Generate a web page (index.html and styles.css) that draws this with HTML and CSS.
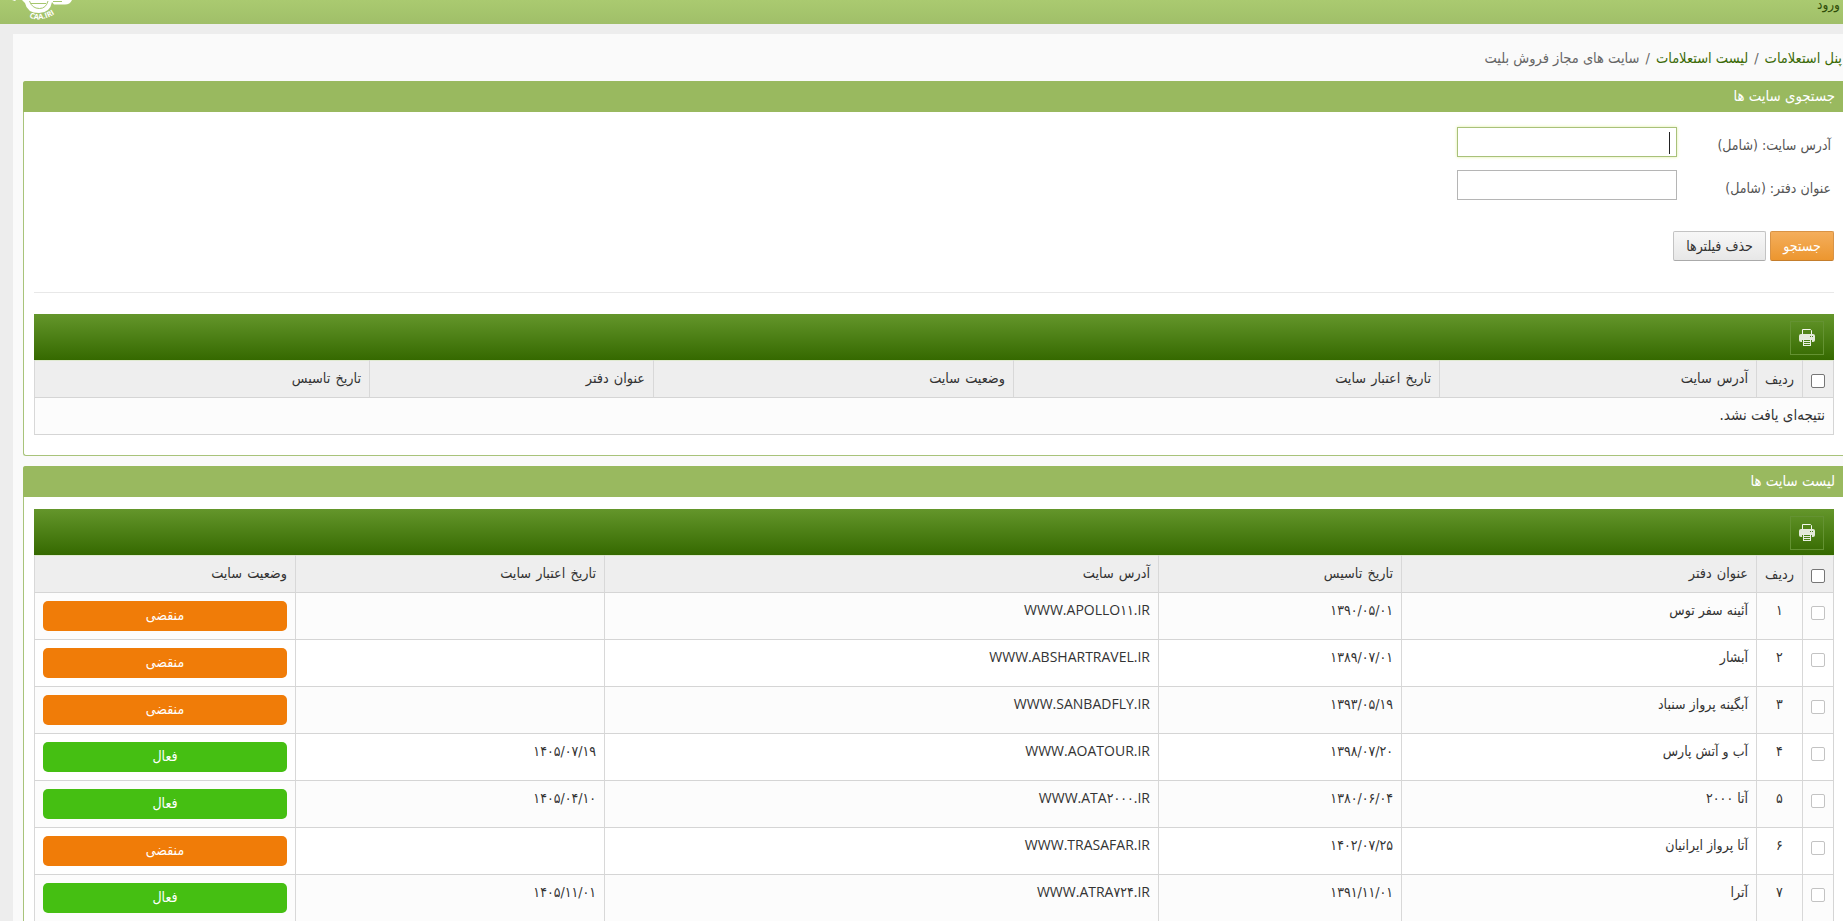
FILE: index.html
```html
<!DOCTYPE html>
<html lang="fa" dir="rtl">
<head>
    <meta charset="UTF-8">
    <meta name="viewport" content="width=device-width, initial-scale=1.0">
    <title>سایت های مجاز فروش بلیت</title>
    <link rel="stylesheet" href="styles.css">
</head>
<body>
    <header class="topbar">
        <a class="login" href="#">ورود</a>
        <svg class="logo" width="74" height="24" viewBox="0 0 74 24">
            <path d="M12 0 L16 0 L15 1 Z" fill="#fff"/>
            <path d="M22 0 H56 V0 H72 Q70 4.500 65 4.500 H54 L52 2 Q50 13 39 13 Q27 13 25 3 Z" fill="#fff"/>
            <path d="M29.500 1 Q32 8.500 39.500 8.500 Q46 8.500 48 1 M31 3.500 H46 M53 1.500 H62" fill="none" stroke="#a5c66d" stroke-width="1"/>
            <path id="arc" d="M29 17 Q41 23.500 57 12.500" fill="none"/>
            <text class="logo-text"><textPath href="#arc">CAA.IRI</textPath></text>
        </svg>
    </header>

    <main class="content">
        <nav class="breadcrumb">
            <a href="#">پنل استعلامات</a><span class="sep">/</span><a href="#">لیست استعلامات</a><span class="sep">/</span><span>سایت های مجاز فروش بلیت</span>
        </nav>

        <!-- Search panel -->
        <section class="panel">
            <h2 class="panel-title">جستجوی سایت ها</h2>
            <div class="panel-body">
                <form class="search-form">
                    <div class="field">
                        <label class="field-label">آدرس سایت: (شامل)</label>
                        <div class="field-input focused"><span class="caret"></span></div>
                    </div>
                    <div class="field">
                        <label class="field-label">عنوان دفتر: (شامل)</label>
                        <div class="field-input"></div>
                    </div>
                    <div class="actions">
                        <button type="button" class="btn btn-primary">جستجو</button>
                        <button type="button" class="btn">حذف فیلترها</button>
                    </div>
                </form>
                <div class="toolbar">
                    <a class="print" href="#">
                        <svg width="16" height="17" viewBox="0 0 16 17">
                            <path d="M3.500 6 V0.500 H11.500 L12.500 1.500 V6" fill="none" stroke="#f4f8ee"/>
                            <rect x="0" y="5" width="16" height="8" rx="2" fill="#e4eadb"/>
                            <path d="M11 7.500 H12 M13 7.500 H14" stroke="#4b7f16"/>
                            <rect x="4.500" y="10.500" width="7" height="6" fill="#4b7f16" stroke="#e9efe2"/>
                            <path d="M3.500 11 V14 M12.500 11 V14" stroke="#4b7f16"/>
                            <path d="M5 12.500 H11 M5 14.500 H11" stroke="#e9efe2"/>
                        </svg>
                    </a>
                </div>
                <table class="grid grid-search">
                    <colgroup><col class="c-check"><col class="c-row"><col class="s-url"><col class="s-expire"><col class="s-status"><col class="s-office"><col></colgroup>
                    <thead>
                        <tr><th class="check"><input type="checkbox"></th><th class="num">ردیف</th><th>آدرس سایت</th><th>تاریخ اعتبار سایت</th><th>وضعیت سایت</th><th>عنوان دفتر</th><th>تاریخ تاسیس</th></tr>
                    </thead>
                    <tbody>
                        <tr><td colspan="7" class="empty">نتیجه‌ای یافت نشد.</td></tr>
                    </tbody>
                </table>
            </div>
        </section>

        <!-- Site list panel -->
        <section class="panel">
            <h2 class="panel-title">لیست سایت ها</h2>
            <div class="panel-body list-body">
                <div class="toolbar">
                    <a class="print" href="#">
                        <svg width="16" height="17" viewBox="0 0 16 17">
                            <path d="M3.500 6 V0.500 H11.500 L12.500 1.500 V6" fill="none" stroke="#f4f8ee"/>
                            <rect x="0" y="5" width="16" height="8" rx="2" fill="#e4eadb"/>
                            <path d="M11 7.500 H12 M13 7.500 H14" stroke="#4b7f16"/>
                            <rect x="4.500" y="10.500" width="7" height="6" fill="#4b7f16" stroke="#e9efe2"/>
                            <path d="M3.500 11 V14 M12.500 11 V14" stroke="#4b7f16"/>
                            <path d="M5 12.500 H11 M5 14.500 H11" stroke="#e9efe2"/>
                        </svg>
                    </a>
                </div>
                <table class="grid grid-list">
                    <colgroup><col class="c-check"><col class="c-row"><col class="l-office"><col class="l-founded"><col class="l-url"><col class="l-expire"><col></colgroup>
                    <thead>
                        <tr><th class="check"><input type="checkbox"></th><th class="num">ردیف</th><th>عنوان دفتر</th><th>تاریخ تاسیس</th><th>آدرس سایت</th><th>تاریخ اعتبار سایت</th><th>وضعیت سایت</th></tr>
                    </thead>
                    <tbody>
                        <tr><td class="check"><input type="checkbox" disabled></td><td class="num">۱</td><td>آئینه سفر توس</td><td>۱۳۹۰/۰۵/۰۱</td><td class="url"><bdi dir="ltr">WWW.APOLLO<span class="fa">۱۱</span>.IR</bdi></td><td></td><td><span class="badge expired">منقضی</span></td></tr>
                        <tr><td class="check"><input type="checkbox" disabled></td><td class="num">۲</td><td>آبشار</td><td>۱۳۸۹/۰۷/۰۱</td><td class="url"><bdi dir="ltr">WWW.ABSHARTRAVEL.IR</bdi></td><td></td><td><span class="badge expired">منقضی</span></td></tr>
                        <tr><td class="check"><input type="checkbox" disabled></td><td class="num">۳</td><td>آبگینه پرواز سنباد</td><td>۱۳۹۳/۰۵/۱۹</td><td class="url"><bdi dir="ltr">WWW.SANBADFLY.IR</bdi></td><td></td><td><span class="badge expired">منقضی</span></td></tr>
                        <tr><td class="check"><input type="checkbox" disabled></td><td class="num">۴</td><td>آب و آتش پارس</td><td>۱۳۹۸/۰۷/۲۰</td><td class="url"><bdi dir="ltr">WWW.AOATOUR.IR</bdi></td><td>۱۴۰۵/۰۷/۱۹</td><td><span class="badge active">فعال</span></td></tr>
                        <tr><td class="check"><input type="checkbox" disabled></td><td class="num">۵</td><td>آتا ۲۰۰۰</td><td>۱۳۸۰/۰۶/۰۴</td><td class="url"><bdi dir="ltr">WWW.ATA<span class="fa">۲۰۰۰</span>.IR</bdi></td><td>۱۴۰۵/۰۴/۱۰</td><td><span class="badge active">فعال</span></td></tr>
                        <tr><td class="check"><input type="checkbox" disabled></td><td class="num">۶</td><td>آتا پرواز ایرانیان</td><td>۱۴۰۲/۰۷/۲۵</td><td class="url"><bdi dir="ltr">WWW.TRASAFAR.IR</bdi></td><td></td><td><span class="badge expired">منقضی</span></td></tr>
                        <tr><td class="check"><input type="checkbox" disabled></td><td class="num">۷</td><td>آترا</td><td>۱۳۹۱/۱۱/۰۱</td><td class="url"><bdi dir="ltr">WWW.ATRA<span class="fa">۷۲۴</span>.IR</bdi></td><td>۱۴۰۵/۱۱/۰۱</td><td><span class="badge active">فعال</span></td></tr>
                    </tbody>
                </table>
            </div>
        </section>
    </main>
</body>
</html>
```

FILE: styles.css
```css
* {
    box-sizing: border-box;
}

body {
    margin: 0;
    height: 921px;
    overflow: hidden;
    background: #ededed;
    font-family: "DejaVu Sans Condensed", "DejaVu Sans", sans-serif;
    font-stretch: condensed;
    font-size: 14px;
    color: #333;
}

a {
    color: #3b6a07;
    text-decoration: none;
}

.topbar {
    display: flex;
    justify-content: space-between;
    height: 24px;
    padding-right: 3px;
    background: linear-gradient(#aaca70, #a0bf69);
}

.login {
    line-height: 14px;
    margin-top: -3px;
    color: #2f4d08;
    font-size: 13.500px;
}

.logo {
    direction: ltr;
}

.logo-text {
    font: bold 7.500px "Open Sans", sans-serif;
    fill: #fff;
}

.content {
    height: 887px;
    margin: 10px 0 0 13px;
    padding-left: 10px;
    background: #fafafa;
    overflow: hidden;
}

.breadcrumb {
    height: 47px;
    line-height: 48px;
    padding-right: 1px;
    color: #666;
    font-size: 14.500px;
}

.sep {
    margin: 0 6px;
}

/* Panels run past the right edge of the window */
.panel {
    margin-bottom: 10px;
    border: 1px solid #a8c37a;
    border-right: 0;
    border-radius: 3px 0 0 3px;
    background: #fff;
}

.panel-title {
    height: 31px;
    margin: -1px 0 0 -1px;
    padding-right: 8px;
    border-radius: 3px 0 0 0;
    background: #99b95f;
    color: #fff;
    font-size: 14.800px;
    font-weight: normal;
    line-height: 30px;
}

.panel-body {
    padding: 15px 9px 20px 10px;
}

.list-body {
    padding-top: 12px;
}

/* Search form */
.search-form {
    height: 166px;
    margin-bottom: 21px;
    border-bottom: 1px solid #e8e8e8;
}

.field {
    display: flex;
    height: 43px;
    padding-right: 3px;
}

.field-label {
    width: 154px;
    line-height: 36px;
    color: #555;
}

.field-input {
    display: flex;
    width: 220px;
    height: 30px;
    padding: 4px 6px;
    border: 1px solid #b5b5b5;
    background: #fff;
}

.field-input.focused {
    border-color: #a9c17a;
    box-shadow: 0 0 3px #dff0a0;
}

.caret {
    width: 1px;
    height: 22px;
    background: #222;
}

.actions {
    display: flex;
    gap: 4px;
    margin-top: 18px;
}

.btn {
    width: 93px;
    height: 30px;
    padding: 0;
    border: 1px solid #c3c3c3;
    border-bottom-color: #aaa;
    border-radius: 2px;
    background: linear-gradient(#f7f7f7, #e7e7e7);
    color: #333;
    font: inherit;
}

.btn-primary {
    width: 64px;
    border-color: #d99345;
    border-bottom-color: #c47d2c;
    background: linear-gradient(#f4ae5c, #ec962f);
    color: #fff;
}

/* Grids */
.toolbar {
    height: 46px;
    padding: 7px 10px;
    background: linear-gradient(#64962b, #356900);
}

.print {
    display: flex;
    align-items: center;
    justify-content: center;
    width: 34px;
    height: 34px;
    padding-bottom: 1px;
    border: 1px solid #649232;
}

.grid {
    width: 100%;
    border-collapse: separate;
    border-spacing: 0;
    table-layout: fixed;
    border-right: 1px solid #d5d5d5;
}

.grid th,
.grid td {
    padding: 0 8px;
    border-left: 1px solid #d8d8d8;
    border-bottom: 1px solid #d5d5d5;
    text-align: right;
    font-weight: normal;
    white-space: nowrap;
}

.grid th {
    height: 38px;
    padding-bottom: 1px;
    background: #eee;
    box-shadow: inset 0 1px #dfe9d0;
    font-size: 14.300px;
    word-spacing: 1px;
}

.grid td {
    height: 47px;
    padding-top: 8px;
    vertical-align: top;
    line-height: 19px;
}

.grid tbody tr:nth-child(odd) {
    background: #fcfcfc;
}

.grid td.empty {
    height: 37px;
    font-size: 15px;
}

.grid .num {
    padding: 0;
    text-align: center;
}

.grid td.num {
    padding-top: 8px;
}

.grid .check {
    padding-left: 0;
}

.grid input {
    display: block;
    width: 14px;
    height: 14px;
    margin: 5px 0 0;
    appearance: none;
    border: 1px solid #767676;
    border-radius: 2px;
    background: #fff;
}

.grid input:disabled {
    border-color: #c3c3c3;
}

.c-check { width: 31px; }
.c-row { width: 46px; }
.s-url { width: 317px; }
.s-expire { width: 426px; }
.s-status { width: 360px; }
.s-office { width: 284px; }
.l-office { width: 355px; }
.l-founded { width: 243px; }
.l-url { width: 554px; }
.l-expire { width: 309px; }

.grid .url {
    padding-top: 7px;
    font: 14px/20px "Open Sans", sans-serif;
    font-stretch: normal;
}

.fa {
    font: 14px "DejaVu Sans Condensed", "DejaVu Sans", sans-serif;
    font-stretch: condensed;
    letter-spacing: -0.900px;
}

.badge {
    display: block;
    height: 30px;
    border-radius: 5px;
    color: #fff;
    line-height: 29px;
    text-align: center;
}

.expired {
    background: #f07c08;
}

.active {
    background: #45bf12;
}
```
